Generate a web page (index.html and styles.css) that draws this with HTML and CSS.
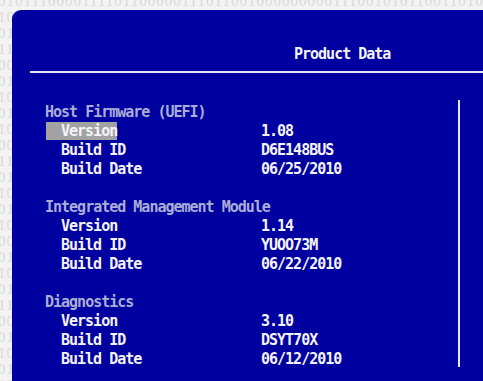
FILE: index.html
```html
<!DOCTYPE html>
<html lang="en">

<head>
    <meta charset="UTF-8">
    <meta name="viewport" content="width=device-width, initial-scale=1.0">
    <title>Product Data</title>
    <link rel="stylesheet" href="styles.css">
</head>

<body>
    <div class="backdrop backdrop-top" aria-hidden="true">0101110000111101100000111011001000000000111001010110011010101010101110</div>
    <pre class="backdrop backdrop-side" aria-hidden="true">10
01
11
00
01
10
01
10
00
11
01
10
01
10
00
01
10
01
11
00
01
10
01
10</pre>

    <main class="panel">
        <header class="panel-head">
            <h1>Product Data</h1>
        </header>
        <div class="panel-body">
            <div class="data-list">
                <section class="group">
                    <h2>Host Firmware (UEFI)</h2>
                    <div class="row row-active"><span class="key">Version</span><span class="val">1.08</span></div>
                    <div class="row"><span class="key">Build ID</span><span class="val">D6E148BUS</span></div>
                    <div class="row"><span class="key">Build Date</span><span class="val">06/25/2010</span></div>
                </section>
                <section class="group">
                    <h2>Integrated Management Module</h2>
                    <div class="row"><span class="key">Version</span><span class="val">1.14</span></div>
                    <div class="row"><span class="key">Build ID</span><span class="val">YUOO73M</span></div>
                    <div class="row"><span class="key">Build Date</span><span class="val">06/22/2010</span></div>
                </section>
                <section class="group">
                    <h2>Diagnostics</h2>
                    <div class="row"><span class="key">Version</span><span class="val">3.10</span></div>
                    <div class="row"><span class="key">Build ID</span><span class="val">DSYT70X</span></div>
                    <div class="row"><span class="key">Build Date</span><span class="val">06/12/2010</span></div>
                </section>
            </div>
            <div class="scroll-rule"></div>
        </div>
    </main>
</body>

</html>
```

FILE: styles.css
```css
html,
body {
    margin: 0;
    height: 100%;
    overflow: hidden;
}

body {
    position: relative;
    background-color: #f3f3f3;
}

.backdrop {
    margin: 0;
    padding: 0;
    position: absolute;
    left: -2px;
    font-family: "Liberation Serif", serif;
    font-size: 15px;
    line-height: 16px;
    letter-spacing: 1px;
    color: #d8d8d8;
}

.backdrop-top {
    top: -7px;
    white-space: nowrap;
}

.backdrop-side {
    top: 9px;
    white-space: pre;
}

.panel {
    position: absolute;
    top: 10px;
    left: 12px;
    right: -150px;
    bottom: -40px;
    background-color: #0000a0;
    border-top-left-radius: 9px;
    font-family: "DejaVu Sans Mono", monospace;
    font-weight: bold;
    font-size: 15px;
    letter-spacing: -1px;
    color: #f4f4f8;
}

.panel-head {
    margin-left: 18px;
    height: 61px;
    border-bottom: 2px solid #e6e6f0;
}

.panel-head h1 {
    margin: 0;
    padding: 35px 0 0 264px;
    font-size: 15px;
    font-weight: bold;
    line-height: 18px;
}

.panel-body {
    display: flex;
    padding-top: 20px;
}

.data-list {
    width: 413px;
    padding: 10px 0 0 33px;
}

.group {
    margin-bottom: 19px;
}

.group h2 {
    margin: 0;
    font-size: 15px;
    font-weight: bold;
    line-height: 19px;
    color: #a9aed6;
}

.row {
    display: flex;
    line-height: 19px;
    white-space: pre;
}

.key {
    flex: none;
    width: 216px;
    padding-left: 16px;
    box-sizing: border-box;
}

.row-active .key {
    background: linear-gradient(#a2a2a2, #a2a2a2) no-repeat 1px 0 / 71px 18px;
}

.scroll-rule {
    width: 2px;
    height: 267px;
    margin-top: 7px;
    background-color: #e8e8f4;
}
```
